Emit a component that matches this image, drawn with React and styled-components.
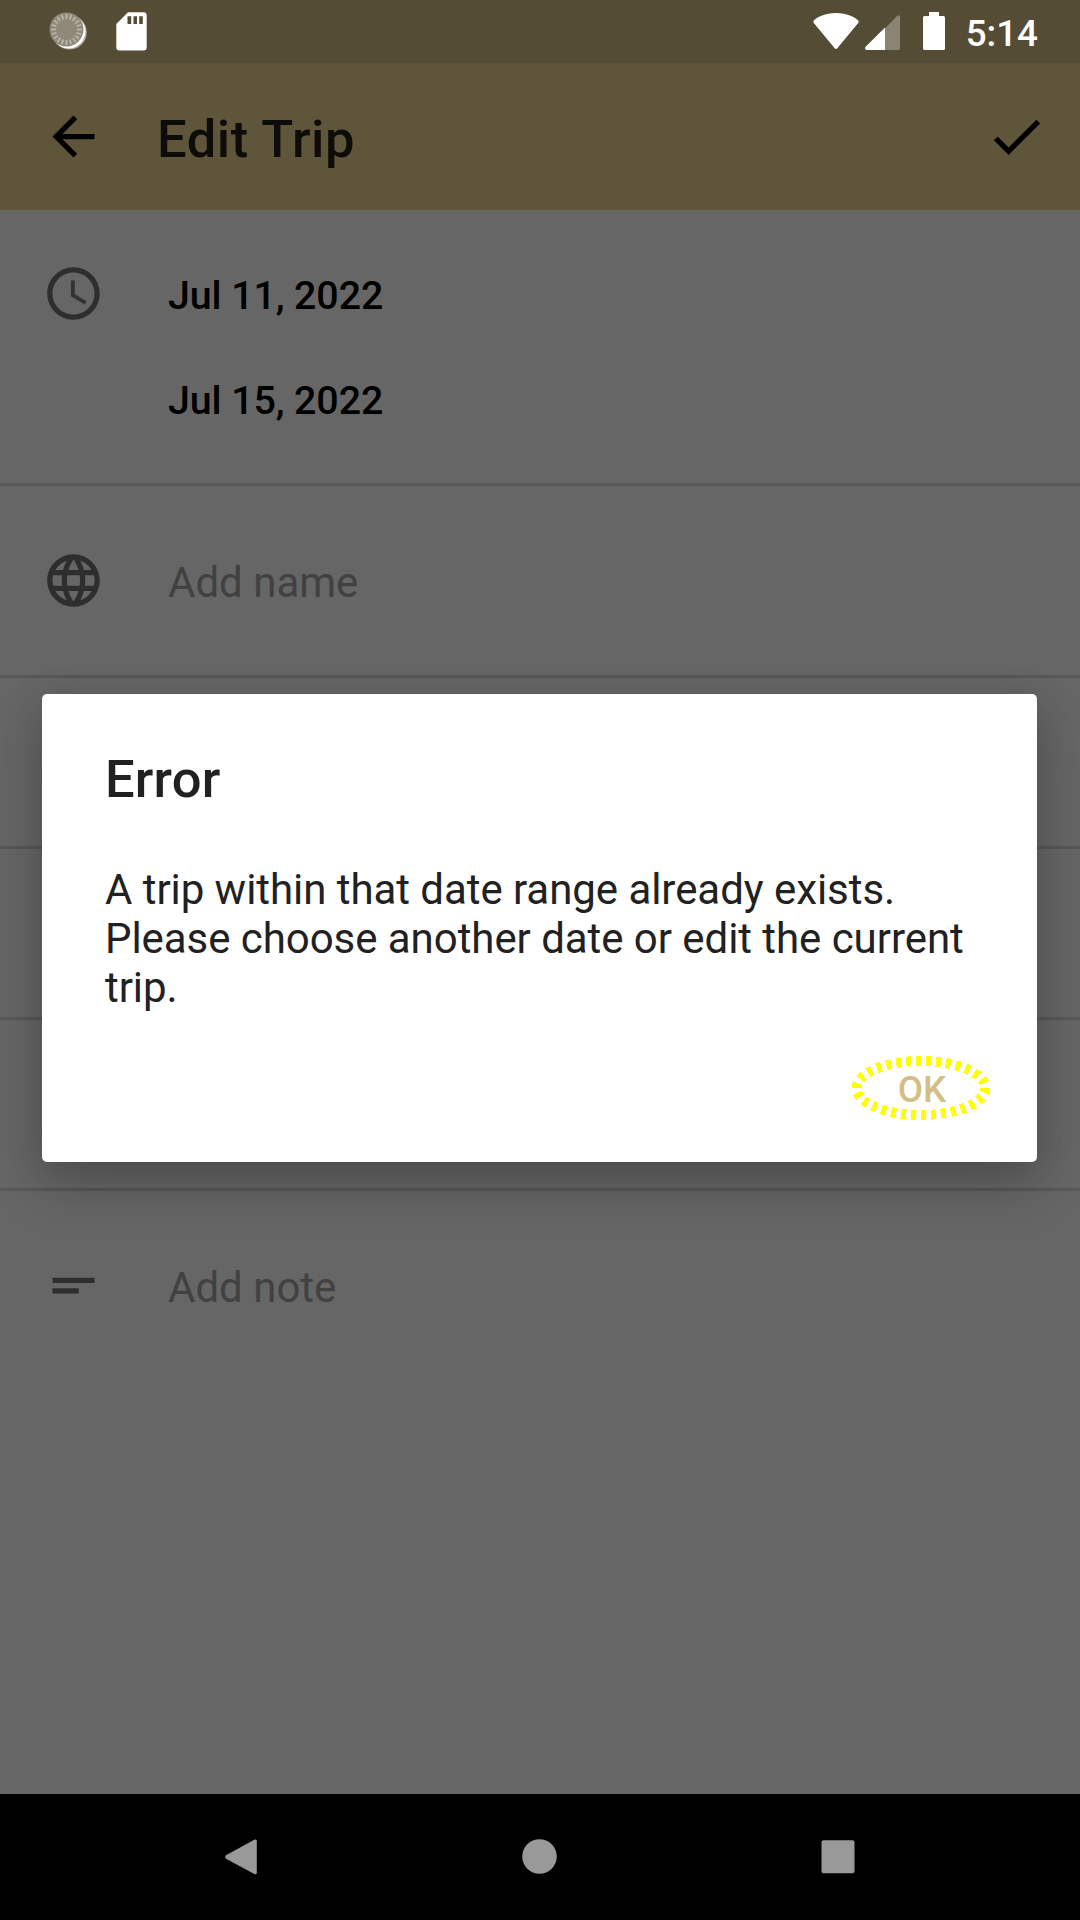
import React from "react";
import styled, { createGlobalStyle } from "styled-components";

const GlobalStyle = createGlobalStyle`
  *, *::before, *::after { box-sizing: border-box; }
  body { margin: 0; background: #000; }
  h1, h2, p { margin: 0; }
  svg { display: block; flex: none; }
`;

const Screen = styled.div`
  position: relative;
  display: flex;
  flex-direction: column;
  width: 1080px;
  height: 1920px;
  overflow: hidden;
  background: #666666;
  font-family: Roboto, "Liberation Sans", sans-serif;
`;

const StatusBar = styled.header`
  display: flex;
  align-items: flex-start;
  justify-content: space-between;
  height: 63px;
  flex: none;
  padding: 0 42px 0 48px;
  background: #544c35;
`;

const StatusGroup = styled.div`
  display: flex;
  align-items: flex-start;
  height: 63px;
`;

const StatusIcon = styled.svg`
  margin-left: ${(p) => p.$gap || 0}px;
  margin-top: ${(p) => p.$top || 0}px;
`;

const Clock = styled.time`
  margin-left: 21px;
  font-size: 36.75px;
  font-weight: 500;
  line-height: 67px;
  color: #ffffff;
`;

const AppBar = styled.div`
  display: flex;
  align-items: flex-start;
  height: 147px;
  flex: none;
  padding: 42px 32px 0 42px;
  background: #5f553a;
`;

const IconButton = styled.button`
  display: block;
  width: 63px;
  height: 63px;
  padding: 0;
  border: 0;
  background: none;
  color: #000000;
`;

const Title = styled.h1`
  flex: 1;
  margin-left: 52px;
  font-size: 52.5px;
  font-weight: 500;
  line-height: 68px;
  letter-spacing: 0.55px;
  color: #0d0c08;
`;

const Form = styled.main`
  display: flex;
  flex-direction: column;
  flex: 1;
`;

const Row = styled.section`
  display: flex;
  align-items: flex-start;
  height: ${(p) => p.$height}px;
  padding: 63px 42px 0;
  border-bottom: ${(p) => (p.$last ? "0" : "3px solid #585858")};
`;

const DateRow = styled(Row)`
  padding-top: 33px;
`;

const RowIcon = styled.div`
  width: 126px;
  flex: none;
  padding-top: ${(p) => p.$top || 0}px;
  color: #2e2e2e;
`;

const DateList = styled.div`
  display: flex;
  flex-direction: column;
`;

const DateValue = styled.span`
  font-size: 39.375px;
  font-weight: 500;
  line-height: 105px;
  letter-spacing: -0.1px;
  color: #000000;
`;

const Placeholder = styled.span`
  margin-top: 4px;
  font-size: 42px;
  line-height: 60px;
  color: #414141;
`;

const Overlay = styled.div`
  position: absolute;
  top: 63px;
  left: 0;
  right: 0;
  bottom: 127px;
  display: flex;
  align-items: center;
  justify-content: center;
`;

const Dialog = styled.div`
  display: flex;
  flex-direction: column;
  width: 995px;
  height: 468px;
  margin-right: 1px;
  padding: 51px 46px 42px 63px;
  border-radius: 5px;
  background: #ffffff;
  box-shadow: 0 26px 56px rgba(0, 0, 0, 0.18), 0 6px 40px rgba(0, 0, 0, 0.12);
`;

const DialogTitle = styled.h2`
  font-size: 52.5px;
  font-weight: 500;
  line-height: 68px;
  letter-spacing: 0.2px;
  color: #212121;
`;

const Message = styled.p`
  width: 880px;
  margin-top: 52px;
  font-size: 42px;
  line-height: 49px;
  letter-spacing: -0.055px;
  color: #212121;
`;

const Actions = styled.div`
  display: flex;
  justify-content: flex-end;
  margin-top: auto;
`;

const OkButton = styled.button`
  position: relative;
  display: flex;
  align-items: center;
  justify-content: center;
  width: 140px;
  height: 64px;
  padding: 3px 0 0 2px;
  border: 0;
  background: none;
  font-family: inherit;
  font-size: 36.75px;
  font-weight: 500;
  line-height: 44px;
  color: #d3bf85;
`;

const FocusRing = styled.svg`
  position: absolute;
  inset: 0;
`;

const NavBar = styled.nav`
  display: flex;
  align-items: flex-start;
  justify-content: space-between;
  height: 126px;
  flex: none;
  padding: 45px 225px 0;
  background: #000000;
`;

const Glyph = ({ children }) => (
  <svg width="63" height="63" viewBox="0 0 24 24" fill="currentColor">
    {children}
  </svg>
);

const ticks = Array.from({ length: 20 }, (_, i) => i * 18);

function SyncDisc() {
  return (
    <StatusIcon width="40" height="40" viewBox="0 0 40 40" $top={11}>
      <circle cx="21.6" cy="21.4" r="17.2" fill="#aaa598" />
      <circle cx="20.6" cy="20.6" r="16.9" fill="#ffffff" />
      <circle cx="18.5" cy="18.5" r="17" fill="#8f8979" />
      {ticks.map((a) => (
        <line
          key={a}
          x1="18.5"
          y1="3"
          x2="18.5"
          y2="8"
          stroke="#bbb7ac"
          strokeWidth="1.7"
          transform={`rotate(${a} 18.5 18.5)`}
        />
      ))}
    </StatusIcon>
  );
}

export default function App() {
  return (
    <>
      <GlobalStyle />
      <Screen>
        <StatusBar>
          <StatusGroup>
            <SyncDisc />
            <StatusIcon width="31" height="39" viewBox="0 0 31 39" $gap={28} $top={12}>
              <path
                fill="#fff"
                fillRule="evenodd"
                d="M12 .3H27.5Q30.7.3 30.7 3.5V35.3Q30.7 38.5 27.5 38.5H3.5Q.3 38.5 .3 35.3V12ZM11.5 4.2V12H15.2V4.2ZM17.5 4.2V12H21V4.2ZM23.2 4.2V12H26.8V4.2Z"
              />
            </StatusIcon>
          </StatusGroup>
          <StatusGroup>
            <StatusIcon width="46" height="37" viewBox="0 0 46 37" $top={13}>
              <path
                fill="#fff"
                d="M23 0C34 0 41.5 4.2 45 7.2Q46.2 8.500 45.2 10L24.500 35Q23 37 21.500 35L.8 10Q-.2 8.500 1 7.200C4.500 4.200 12 0 23 0Z"
              />
            </StatusIcon>
            <StatusIcon width="35" height="35" viewBox="0 0 35 35" $gap={6} $top={15}>
              <path fill="#8a8474" d="M20 13.500L32.500 .6Q35-.8 35 2V33Q35 35 33 35H20Z" />
              <path fill="#fff" d="M20 12.500V35H1.500Q-.8 34.500 .6 31.800Z" />
            </StatusIcon>
            <StatusIcon width="22" height="38" viewBox="0 0 22 38" $gap={23} $top={12}>
              <path
                fill="#fff"
                d="M6 0H16V4H20.500Q22 4 22 5.500V36.500Q22 38 20.500 38H1.500Q0 38 0 36.500V5.500Q0 4 1.500 4H6Z"
              />
            </StatusIcon>
            <Clock>5:14</Clock>
          </StatusGroup>
        </StatusBar>

        <AppBar>
          <IconButton aria-label="Back">
            <Glyph>
              <path d="M20 11H7.830l5.590-5.590L12 4l-8 8 8 8 1.410-1.410L7.830 13H20v-2z" />
            </Glyph>
          </IconButton>
          <Title>Edit Trip</Title>
          <IconButton aria-label="Save">
            <Glyph>
              <path d="M9 16.170L4.830 12l-1.420 1.410L9 19 21 7l-1.410-1.410z" />
            </Glyph>
          </IconButton>
        </AppBar>

        <Form>
          <DateRow $height={276}>
            <RowIcon $top={19}>
              <Glyph>
                <path d="M11.990 2C6.470 2 2 6.480 2 12s4.470 10 9.990 10C17.520 22 22 17.520 22 12S17.520 2 11.990 2zM12 20c-4.420 0-8-3.580-8-8s3.580-8 8-8 8 3.580 8 8-3.580 8-8 8z" />
                <path d="M12.500 7H11v6l5.250 3.150.75-1.230-4.500-2.670z" opacity="0.9" />
              </Glyph>
            </RowIcon>
            <DateList>
              <DateValue>Jul 11, 2022</DateValue>
              <DateValue>Jul 15, 2022</DateValue>
            </DateList>
          </DateRow>
          <Row $height={192}>
            <RowIcon>
              <Glyph>
                <path d="M11.990 2C6.470 2 2 6.480 2 12s4.470 10 9.990 10C17.520 22 22 17.520 22 12S17.520 2 11.990 2zm6.930 6h-2.950c-.32-1.250-.78-2.450-1.380-3.560 1.840.63 3.370 1.910 4.330 3.560zM12 4.040c.83 1.200 1.480 2.530 1.910 3.960h-3.820c.43-1.430 1.080-2.760 1.910-3.960zM4.260 14C4.100 13.360 4 12.690 4 12s.1-1.360.26-2h3.380c-.08.66-.14 1.320-.14 2 0 .68.06 1.340.14 2H4.260zm.82 2h2.950c.32 1.250.78 2.450 1.380 3.560-1.840-.63-3.370-1.900-4.330-3.560zm2.950-8H5.080c.96-1.660 2.490-2.930 4.330-3.560C8.810 5.550 8.350 6.750 8.030 8zM12 19.960c-.83-1.200-1.480-2.530-1.910-3.960h3.820c-.43 1.430-1.080 2.760-1.910 3.960zM14.340 14H9.660c-.09-.66-.16-1.320-.16-2 0-.68.07-1.350.16-2h4.680c.09.65.16 1.320.16 2 0 .68-.07 1.340-.16 2zm.25 5.560c.6-1.110 1.060-2.310 1.380-3.560h2.950c-.96 1.650-2.490 2.930-4.330 3.560zM16.360 14c.08-.66.14-1.320.14-2 0-.68-.06-1.340-.14-2h3.380c.16.64.26 1.310.26 2s-.1 1.360-.26 2h-3.380z" />
              </Glyph>
            </RowIcon>
            <Placeholder>Add name</Placeholder>
          </Row>
          <Row $height={171} />
          <Row $height={171} />
          <Row $height={171} />
          <Row $height={171} $last>
            <RowIcon>
              <Glyph>
                <path d="M4 9h16v2H4zM4 13h10v2H4z" />
              </Glyph>
            </RowIcon>
            <Placeholder>Add note</Placeholder>
          </Row>
        </Form>

        <NavBar>
          <svg width="32" height="36" viewBox="0 0 32 36" fill="#999">
            <path d="M29.300 .8Q31.800-.3 31.800 2.200V33.600Q31.800 36 29.300 34.900L1 19.700Q-.7 18 1 16.300Z" />
          </svg>
          <svg width="35" height="36" viewBox="0 0 35 36" fill="#999">
            <circle cx="17.500" cy="17.500" r="17.300" />
          </svg>
          <svg width="34" height="36" viewBox="0 0 34 36" fill="#999">
            <rect x=".5" y="1.300" width="33" height="33" rx="2" />
          </svg>
        </NavBar>

        <Overlay>
          <Dialog role="alertdialog">
            <DialogTitle>Error</DialogTitle>
            <Message>
              A trip within that date range already exists. Please choose another date or edit the
              current trip.
            </Message>
            <Actions>
              <OkButton>
                OK
                <FocusRing width="140" height="64" viewBox="0 0 140 64" fill="none">
                  <ellipse
                    cx="70"
                    cy="32"
                    rx="64.500"
                    ry="27"
                    stroke="#ffff00"
                    strokeWidth="10"
                    pathLength="300"
                    strokeDasharray="5 5"
                    shapeRendering="crispEdges"
                  />
                </FocusRing>
              </OkButton>
            </Actions>
          </Dialog>
        </Overlay>
      </Screen>
    </>
  );
}
